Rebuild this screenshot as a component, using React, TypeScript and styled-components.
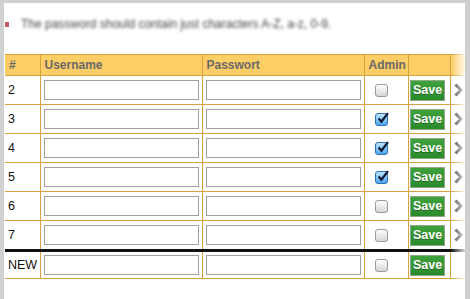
import * as React from "react";
import styled, { createGlobalStyle } from "styled-components";

const rows = [
  { id: "2", admin: false, more: true },
  { id: "3", admin: true, more: true },
  { id: "4", admin: true, more: true },
  { id: "5", admin: true, more: true },
  { id: "6", admin: false, more: true },
  { id: "7", admin: false, more: true },
];

const Checkbox = ({ checked }: { checked: boolean }) => (
  <Box $checked={checked}>
    {checked && (
      <svg width="13" height="13" viewBox="0 0 12 12">
        <path d="M2.5 6 L5 9 L11 1" fill="none" stroke="#101830" strokeWidth="2" />
      </svg>
    )}
  </Box>
);

const Chevron = () => (
  <svg width="9" height="14" viewBox="0 0 9 14">
    <path d="M1.5 1.5 L7 7 L1.5 12.5" fill="none" stroke="#3e3e3e" strokeWidth="3" />
  </svg>
);

const App = () => {
  return (
    <>
      <GlobalStyle />
      <Panel>
        <Notice>
          <Bullet />
          <NoticeText>The password should contain just characters A-Z, a-z, 0-9.</NoticeText>
        </Notice>
        <Table>
          <colgroup>
            <col style={{ width: 35 }} />
            <col style={{ width: 162 }} />
            <col style={{ width: 162 }} />
            <col style={{ width: 44 }} />
            <col style={{ width: 42 }} />
            <col style={{ width: 24 }} />
          </colgroup>
          <thead>
            <tr>
              <Th>#</Th>
              <Th>Username</Th>
              <Th>Passwort</Th>
              <Th>Admin</Th>
              <Th />
              <Th />
            </tr>
          </thead>
          <tbody>
            {rows.map((r) => (
              <tr key={r.id}>
                <Td>{r.id}</Td>
                <Td>
                  <Field />
                </Td>
                <Td>
                  <Field type="password" />
                </Td>
                <Td $center>
                  <Checkbox checked={r.admin} />
                </Td>
                <Td $center>
                  <SaveButton>Save</SaveButton>
                </Td>
                <Td>{r.more && <Chevron />}</Td>
              </tr>
            ))}
            <NewRow>
              <Td>NEW</Td>
              <Td>
                <Field />
              </Td>
              <Td>
                <Field type="password" />
              </Td>
              <Td $center>
                <Checkbox checked={false} />
              </Td>
              <Td $center>
                <SaveButton>Save</SaveButton>
              </Td>
              <Td />
            </NewRow>
          </tbody>
        </Table>
        <EdgeFade />
      </Panel>
    </>
  );
};

export default App;

const GlobalStyle = createGlobalStyle`
  html, body {
    margin: 0;
    padding: 0;
    background: #d0d0d0;
    overflow: hidden;
  }
  body {
    padding: 3px 5px 0 4px;
    font-family: "Liberation Sans", Arial, sans-serif;
  }
`;

const Panel = styled.div`
  position: relative;
  width: 461px;
  height: 296px;
  background: #fff;
  overflow: hidden;
`;

const Notice = styled.div`
  display: flex;
  align-items: center;
  gap: 12px;
  height: 18px;
  margin: 12px 0 0 1px;
`;

const Bullet = styled.span`
  width: 4px;
  height: 5px;
  background: #c85a66;
`;

const NoticeText = styled.span`
  font-size: 12px;
  color: #444;
  filter: blur(1.4px);
`;

const Table = styled.table`
  border-collapse: collapse;
  table-layout: fixed;
  width: 469px;
  margin: 21px 0 0 1px;
`;

const Th = styled.th`
  height: 20px;
  padding: 0 0 0 4px;
  background: #fdcd66;
  border: 1px solid #d9a23c;
  color: #6a6a66;
  font-size: 12px;
  font-weight: bold;
  text-align: left;
  &:first-child {
    border-left: none;
  }
`;

const Td = styled.td<{ $center?: boolean }>`
  height: 28px;
  padding: 0 0 0 ${(p) => (p.$center ? 0 : 3)}px;
  border: 1px solid #d9a23c;
  font-size: 12.5px;
  color: #111;
  text-align: ${(p) => (p.$center ? "center" : "left")};
  vertical-align: middle;
  &:first-child {
    border-left: none;
  }
  svg {
    display: block;
  }
`;

const NewRow = styled.tr`
  td {
    border-top: 3px solid #111;
    height: 26px;
  }
`;

const Field = styled.input`
  box-sizing: border-box;
  display: block;
  width: 155px;
  height: 20px;
  margin: 0;
  border: 1px solid #a0a0a0;
  background: #fff;
`;

const Box = styled.span<{ $checked: boolean }>`
  box-sizing: border-box;
  display: inline-flex;
  align-items: center;
  justify-content: center;
  width: 13px;
  height: 13px;
  margin: 0 10px 0 0;
  border-radius: 3px;
  border: 1px solid ${(p) => (p.$checked ? "#2d6fb8" : "#9a9a9a")};
  background: ${(p) =>
    p.$checked
      ? "linear-gradient(#bfe4ff, #4aa6f0)"
      : "linear-gradient(#ffffff, #d6d6d6)"};
  vertical-align: middle;
  svg {
    margin: -3px -3px 0 0;
  }
`;

const SaveButton = styled.button`
  box-sizing: border-box;
  width: 35px;
  height: 21px;
  padding: 0;
  margin: 0 3px 0 0;
  border: 1px solid #8fa88a;
  background: linear-gradient(#3fa23d, #2a8a2a);
  color: #fff;
  font-family: "Liberation Sans", Arial, sans-serif;
  font-size: 12.5px;
  font-weight: bold;
  text-shadow: 0 1px 0 rgba(0, 0, 0, 0.3);
`;

const EdgeFade = styled.div`
  position: absolute;
  top: 0;
  right: 0;
  width: 14px;
  height: 100%;
  background: linear-gradient(to right, rgba(255, 255, 255, 0), rgba(255, 255, 255, 0.85));
  pointer-events: none;
`;
